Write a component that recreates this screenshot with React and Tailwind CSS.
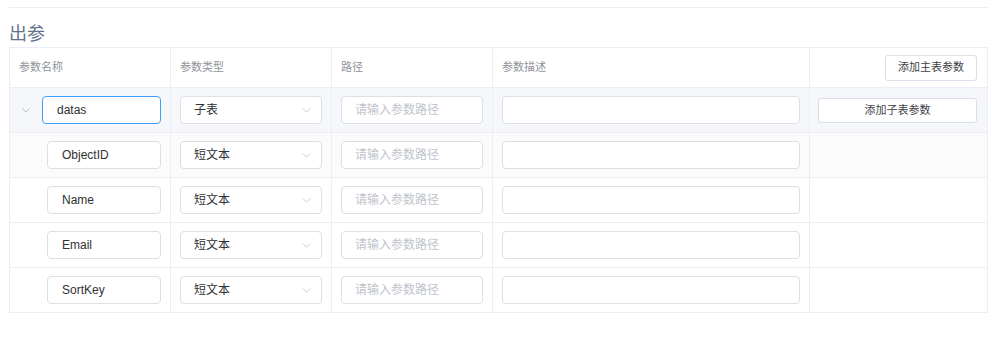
import React from "react";

const FONT = { fontFamily: '"Liberation Sans", Arial, "Noto Sans CJK SC", sans-serif' };

function Chevron({ className }) {
  return (
    <svg viewBox="0 0 10 6" className={className} fill="none" stroke="currentColor" strokeWidth="1">
      <path d="M0.5 0.5 L5 5 L9.5 0.5" />
    </svg>
  );
}

const cell = "border-r border-b border-[#ebeef5] flex items-center";

function NameInput({ value, focused }) {
  return (
    <div
      className={
        "h-[28px] w-full rounded-[4px] border bg-white flex items-center px-[14px] text-[12px] text-[#303133] " +
        (focused ? "border-[#409eff]" : "border-[#dcdfe6]")
      }
    >
      {value}
    </div>
  );
}

function Select({ value }) {
  return (
    <div className="h-[28px] w-full rounded-[4px] border border-[#dcdfe6] bg-white flex items-center justify-between pl-[13px] pr-[10px] text-[12px] text-[#303133]">
      <span>{value}</span>
      <Chevron className="w-[9px] h-[5px] text-[#c0c4cc]" />
    </div>
  );
}

function PathInput() {
  return (
    <div className="h-[28px] w-full rounded-[4px] border border-[#dcdfe6] bg-white flex items-center px-[13px] text-[12px] text-[#c0c4cc]">
      请输入参数路径
    </div>
  );
}

function DescInput() {
  return <div className="h-[28px] w-full rounded-[4px] border border-[#dcdfe6] bg-white" />;
}

const children = ["ObjectID", "Name", "Email", "SortKey"];

export default function App() {
  return (
    <div className="bg-white w-[1000px] h-[341px] pt-[7px] pl-[9px]" style={FONT}>
      <div className="h-px w-[980px] bg-[#ebeef5]" />
      <div className="mt-[14px] text-[18px] leading-[25px] text-[#64728a]">出参</div>
      <div className="w-[979px] border-l border-t border-[#ebeef5] grid grid-cols-[161px_161px_161px_317px_1fr]">
        {["参数名称", "参数类型", "路径", "参数描述"].map((t) => (
          <div key={t} className={cell + " h-[40px] pl-[9px] text-[11px] text-[#909399]"}>
            {t}
          </div>
        ))}
        <div className={cell + " h-[40px] justify-end pr-[10px]"}>
          <div className="h-[26px] px-[12px] rounded-[3px] border border-[#dcdfe6] bg-white flex items-center text-[11px] text-[#404246]">
            添加主表参数
          </div>
        </div>

        <div className={cell + " h-[45px] bg-[#f5f7fa] pl-[12px] pr-[9px]"}>
          <Chevron className="w-[8px] h-[5px] text-[#a8abb2] mr-[12px] shrink-0" />
          <NameInput value="datas" focused />
        </div>
        <div className={cell + " h-[45px] bg-[#f5f7fa] px-[9px]"}>
          <Select value="子表" />
        </div>
        <div className={cell + " h-[45px] bg-[#f5f7fa] px-[9px]"}>
          <PathInput />
        </div>
        <div className={cell + " h-[45px] bg-[#f5f7fa] px-[9px]"}>
          <DescInput />
        </div>
        <div className={cell + " h-[45px] bg-[#f5f7fa] pl-[8px] pr-[10px]"}>
          <div className="h-[25px] w-full rounded-[3px] border border-[#dcdfe6] bg-white flex items-center justify-center text-[11px] text-[#404246]">
            添加子表参数
          </div>
        </div>

        {children.map((name, i) => {
          const bg = i === 0 ? " bg-[#fbfbfc]" : " bg-white";
          return (
            <React.Fragment key={name}>
              <div className={cell + " h-[45px] pl-[37px] pr-[9px]" + bg}>
                <NameInput value={name} />
              </div>
              <div className={cell + " h-[45px] px-[9px]" + bg}>
                <Select value="短文本" />
              </div>
              <div className={cell + " h-[45px] px-[9px]" + bg}>
                <PathInput />
              </div>
              <div className={cell + " h-[45px] px-[9px]" + bg}>
                <DescInput />
              </div>
              <div className={cell + " h-[45px]" + bg} />
            </React.Fragment>
          );
        })}
      </div>
    </div>
  );
}
